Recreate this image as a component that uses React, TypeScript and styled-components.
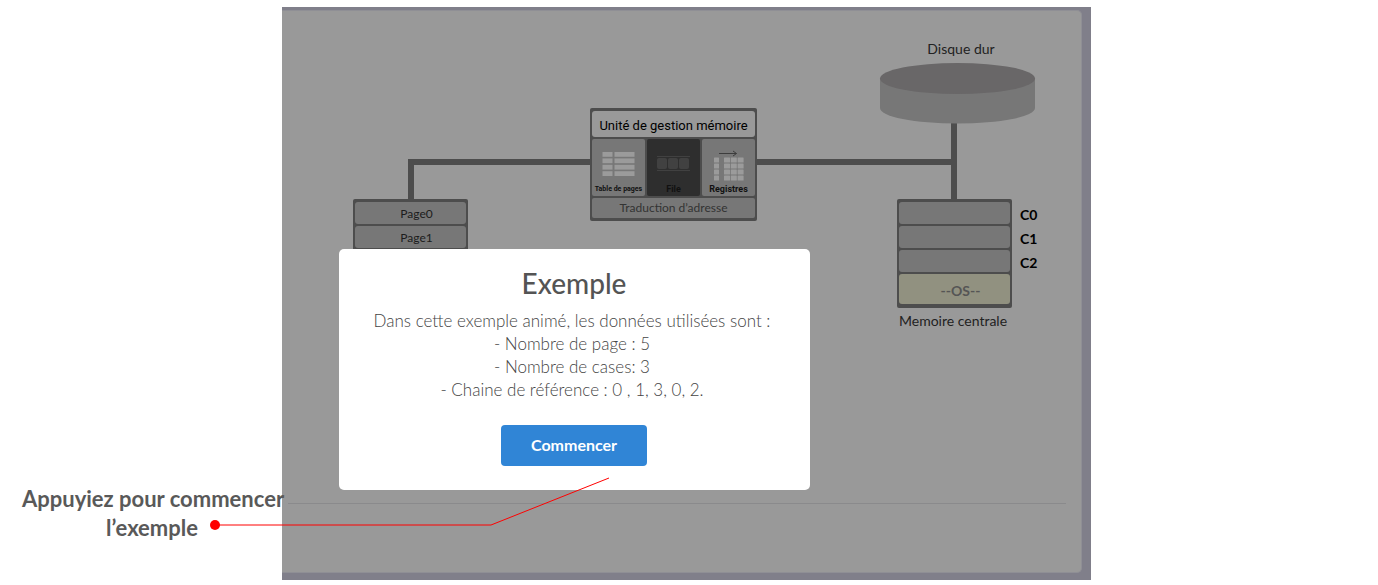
import React from "react";
import styled, { createGlobalStyle } from "styled-components";

const ink = "#4d4d4d";
const cellGrey = "#777777";
const panelGrey = "#999999";
const uiFont = `Lato, "Noto Sans", sans-serif`;
const techFont = `Roboto, "Liberation Sans", sans-serif`;

const GlobalStyle = createGlobalStyle`
  *, *::before, *::after { box-sizing: border-box; }
  body { margin: 0; background: #fff; font-family: ${uiFont}; }
`;

const Page = styled.main`
  display: grid;
  grid-template-columns: 282fr 809fr 287fr;
  align-items: end;
  padding: 7px 0 5px;
`;

const Caption = styled.p`
  position: relative;
  z-index: 2;
  justify-self: end;
  width: 260px;
  margin: 0 0 38px;
  color: #595959;
  font-size: 22px;
  font-weight: 700;
  line-height: 29px;
  text-align: center;
  white-space: nowrap;
`;

const Pointer = styled.svg`
  position: absolute;
  left: 187px;
  bottom: 0;
  overflow: visible;
`;

const Frame = styled.section`
  position: relative;
  padding: 3px 9px 7px 0;
  background: #807f8a;
`;

const Panel = styled.div`
  display: flex;
  flex-direction: column;
  background: ${panelGrey};
  border: 1px solid #8f8f95;
  border-left: 0;
  border-radius: 0 5px 5px 0;
`;

const Canvas = styled.div`
  position: relative;
  height: 492px;
`;

const Divider = styled.hr`
  width: auto;
  height: 1px;
  margin: 0 15px 0 6px;
  border: 0;
  background: #8a8a8c;
`;

const Footer = styled.div`
  height: 68px;
`;

const Wires = styled.svg`
  position: absolute;
  left: 0;
  top: 0;
`;

const Node = styled.div<{ $x: number; $y: number; $w: number }>`
  position: absolute;
  left: ${(p) => p.$x}px;
  top: ${(p) => p.$y}px;
  width: ${(p) => p.$w}px;
`;

const Stack = styled.div`
  display: flex;
  flex-direction: column;
  gap: 2px;
  padding: 3px 2px 4px;
  background: ${ink};
  border-radius: 2px;
`;

const Slot = styled.div<{ $os?: boolean }>`
  height: ${(p) => (p.$os ? 30 : 22)}px;
  padding-left: 12px;
  border-radius: 3px;
  background: ${(p) => (p.$os ? "#919180" : cellGrey)};
  color: ${(p) => (p.$os ? "#555" : "#1c1c1c")};
  font-size: ${(p) => (p.$os ? 14 : 12)}px;
  font-weight: ${(p) => (p.$os ? 700 : 400)};
  line-height: ${(p) => (p.$os ? 34 : 24)}px;
  text-align: center;
`;

const Label = styled.div`
  color: #222;
  font-size: 14px;
  line-height: 20px;
  text-align: center;
  white-space: nowrap;
`;

const SlotNames = styled.div`
  display: flex;
  flex-direction: column;
  color: #000;
  font-size: 14px;
  font-weight: 700;
  line-height: 24px;
`;

const Unit = styled.div`
  display: flex;
  flex-direction: column;
  gap: 2px;
  padding: 3px 2px;
  background: ${ink};
  border-radius: 2px;
`;

const UnitTitle = styled.div`
  height: 26px;
  border-radius: 3px;
  background: ${panelGrey};
  color: #000;
  font-family: ${techFont};
  font-size: 13px;
  line-height: 30px;
  text-align: center;
  white-space: nowrap;
`;

const UnitParts = styled.div`
  display: grid;
  grid-template-columns: repeat(3, 1fr);
  gap: 2px;
`;

const Part = styled.div<{ $dark?: boolean; $small?: boolean }>`
  display: flex;
  flex-direction: column;
  align-items: center;
  height: 57px;
  padding-top: 10px;
  border-radius: 2px;
  background: ${(p) => (p.$dark ? "#2e2e2e" : cellGrey)};
  color: #111;
  font-family: ${techFont};
  font-size: ${(p) => (p.$small ? 7 : 9)}px;
  font-weight: 700;
  line-height: 12px;
  white-space: nowrap;
`;

const UnitFoot = styled.div`
  height: 20px;
  border-radius: 2px;
  background: ${cellGrey};
  color: #333;
  font-size: 12px;
  line-height: 20px;
  text-align: center;
`;

const Dialog = styled.div`
  position: absolute;
  left: 57px;
  top: 242px;
  display: flex;
  flex-direction: column;
  align-items: center;
  width: 471px;
  padding: 16px 21px 24px 20px;
  border-radius: 5px;
  background: #fff;
  text-align: center;
`;

const Title = styled.h2`
  margin: 0;
  color: #545454;
  font-size: 28px;
  font-weight: 500;
  line-height: 36px;
`;

const Message = styled.p`
  margin: 8px 0 24px;
  padding-right: 4px;
  color: #444;
  font-size: 17px;
  font-weight: 300;
  line-height: 23px;
  white-space: pre-line;
`;

const Start = styled.button`
  width: 146px;
  height: 41px;
  padding: 0 0 2px;
  border: 0;
  border-radius: 4px;
  background: #3085d6;
  color: #fff;
  font-family: ${uiFont};
  font-size: 16px;
  font-weight: 700;
`;

const rows = [0, 1, 2, 3];
const cols = [0, 1, 2];

const TableIcon = () => (
  <svg width="34" height="34" fill="#9b9b9b" aria-hidden="true">
    {rows.map((r) => (
      <g key={r}>
        <rect x="0.5" y={3 + r * 6.4} width="10" height="4.8" />
        <rect x="12.5" y={3 + r * 6.4} width="20" height="4.8" />
      </g>
    ))}
  </svg>
);

const QueueIcon = () => (
  <svg width="34" height="34" fill="#414141" aria-hidden="true">
    <path d="M0 7.5H33M0 21.5H33" stroke="#414141" />
    {cols.map((c) => (
      <rect key={c} x={c * 11} y="9" width="10" height="11" rx="2" />
    ))}
  </svg>
);

const RegisterIcon = () => (
  <svg width="34" height="34" fill="#9b9b9b" aria-hidden="true">
    <path d="M7 4.5H24.5M21 2L24.5 4.5L21 7" fill="none" stroke="#3d3d3d" />
    {rows.map((r) => (
      <g key={r}>
        <rect x="2" y={8.5 + r * 6} width="5" height="5" rx="0.5" />
        {cols.map((c) => (
          <rect
            key={c}
            x={12 + c * 6.8}
            y={8.5 + r * 6}
            width="6"
            height="5"
            rx="0.5"
          />
        ))}
      </g>
    ))}
  </svg>
);

export default function App() {
  return (
    <>
      <GlobalStyle />
      <Page>
        <Caption>
          Appuyiez pour commencer
          <br />
          l’exemple
          <Pointer width="408" height="58" aria-hidden="true">
            <circle cx="6" cy="41" r="5" fill="#f00" />
            <path d="M6 41H282L400 -6" fill="none" stroke="#f00" />
          </Pointer>
        </Caption>
        <Frame>
          <Panel>
            <Canvas>
              <Wires width="790" height="300" aria-hidden="true">
                <path
                  d="M129 190V151H672M672 110V190"
                  fill="none"
                  stroke={ink}
                  strokeWidth="6"
                />
                <path
                  d="M598 67V97A77.5 15.5 0 0 0 753 97V67Z"
                  fill={cellGrey}
                />
                <ellipse cx="675.5" cy="67.5" rx="77.5" ry="15.5" fill="#696768" />
              </Wires>
              <Node $x={71} $y={188} $w={115}>
                <Stack>
                  <Slot>Page0</Slot>
                  <Slot>Page1</Slot>
                </Stack>
              </Node>
              <Node $x={308} $y={97} $w={167}>
                <Unit>
                  <UnitTitle>Unité de gestion mémoire</UnitTitle>
                  <UnitParts>
                    <Part $small>
                      <TableIcon />
                      Table de pages
                    </Part>
                    <Part $dark>
                      <QueueIcon />
                      File
                    </Part>
                    <Part>
                      <RegisterIcon />
                      Registres
                    </Part>
                  </UnitParts>
                  <UnitFoot>Traduction d’adresse</UnitFoot>
                </Unit>
              </Node>
              <Node $x={615} $y={28} $w={128}>
                <Label>Disque dur</Label>
              </Node>
              <Node $x={615} $y={188} $w={115}>
                <Stack>
                  <Slot />
                  <Slot />
                  <Slot />
                  <Slot $os>--OS--</Slot>
                </Stack>
              </Node>
              <Node $x={738} $y={192} $w={30}>
                <SlotNames>
                  <span>C0</span>
                  <span>C1</span>
                  <span>C2</span>
                </SlotNames>
              </Node>
              <Node $x={607} $y={300} $w={128}>
                <Label>Memoire centrale</Label>
              </Node>
            </Canvas>
            <Divider />
            <Footer />
          </Panel>
          <Dialog role="dialog" aria-labelledby="dialog-title">
            <Title id="dialog-title">Exemple</Title>
            <Message>
              {`Dans cette exemple animé, les données utilisées sont :
              - Nombre de page : 5
              - Nombre de cases: 3
              - Chaine de référence : 0 , 1, 3, 0, 2.`}
            </Message>
            <Start type="button">Commencer</Start>
          </Dialog>
        </Frame>
      </Page>
    </>
  );
}
